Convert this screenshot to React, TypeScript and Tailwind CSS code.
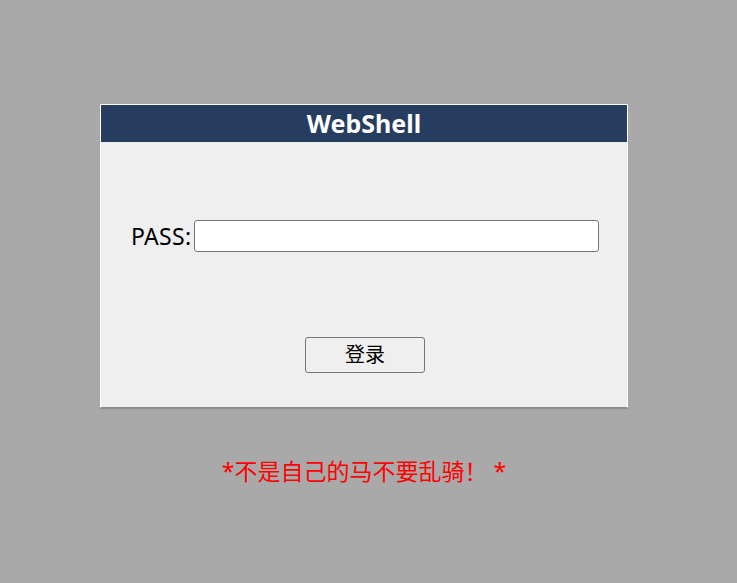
const App = () => {
  return (
    <div className="min-h-[583px] w-full bg-[#a9a9a9] pt-[104px] pl-[100px] font-['Noto_Sans','Noto_Sans_CJK_SC',sans-serif]">
      <div className="w-[528px]">
        <div className="border border-white border-b-[#8a8a8a] bg-[#efefef] shadow-[0_1px_1px_rgba(0,0,0,0.15)]">
          <div className="h-[37px] bg-[#263d5f] flex items-center justify-center">
            <h1 className="text-[25px] font-bold text-white leading-none">WebShell</h1>
          </div>
          <div className="h-[265px] flex flex-col">
            <div className="mt-[78px] flex items-center pl-[30px]">
              <label className="w-[63px] text-[23px] tracking-[0.3px] text-black leading-none">PASS:</label>
              <input
                type="password"
                className="w-[405px] h-[32px] bg-white border border-[#767676] rounded-[3px] outline-none"
              />
            </div>
            <div className="mt-[85px] flex justify-center pl-[2px]">
              <button className="w-[120px] h-[36px] bg-[#efefef] border border-[#767676] rounded-[3px] text-[20px] text-black leading-none">
                登录
              </button>
            </div>
          </div>
        </div>
        <p className="mt-[46px] text-center text-[23px] text-[#ff0000]">*不是自己的马不要乱骑！ *</p>
      </div>
    </div>
  );
};

export default App;
